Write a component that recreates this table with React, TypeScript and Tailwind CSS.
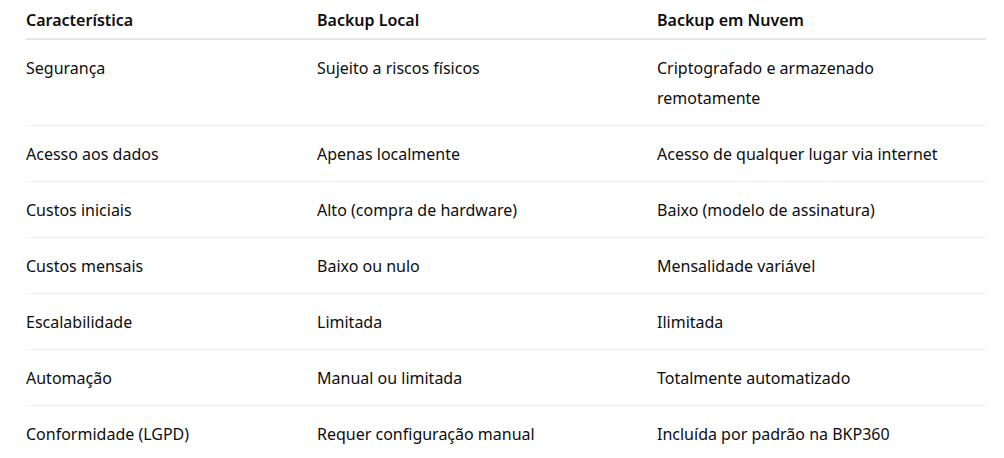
const ROWS = [
  ['Segurança', 'Sujeito a riscos físicos', 'Criptografado e armazenado remotamente'],
  ['Acesso aos dados', 'Apenas localmente', 'Acesso de qualquer lugar via internet'],
  ['Custos iniciais', 'Alto (compra de hardware)', 'Baixo (modelo de assinatura)'],
  ['Custos mensais', 'Baixo ou nulo', 'Mensalidade variável'],
  ['Escalabilidade', 'Limitada', 'Ilimitada'],
  ['Automação', 'Manual ou limitada', 'Totalmente automatizado'],
  ['Conformidade (LGPD)', 'Requer configuração manual', 'Incluída por padrão na BKP360'],
] as const;

const COLS = 'grid grid-cols-[291px_340px_329px]';

export default function App() {
  return (
    <div className="min-h-[458px] bg-white px-[26px] font-['Segoe_UI','Noto_Sans',sans-serif] text-[16px] text-[#0d0d0d]">
      <div className="w-[960px]">
        <div className={`${COLS} border-b-2 border-[#e5e5e5] pt-[5px] pb-[3px] leading-[30px] font-semibold`}>
          <div>Característica</div>
          <div>Backup Local</div>
          <div>Backup em Nuvem</div>
        </div>
        {ROWS.map((row, i) => (
          <div
            key={row[0]}
            className={`${COLS} pt-[13px] pb-[12px] leading-[30px] ${i < ROWS.length - 1 ? 'border-b border-[#f0f0f0]' : ''}`}
          >
            {row.map((cell) => (
              <div key={cell} className="pr-4">
                {cell}
              </div>
            ))}
          </div>
        ))}
      </div>
    </div>
  );
}
